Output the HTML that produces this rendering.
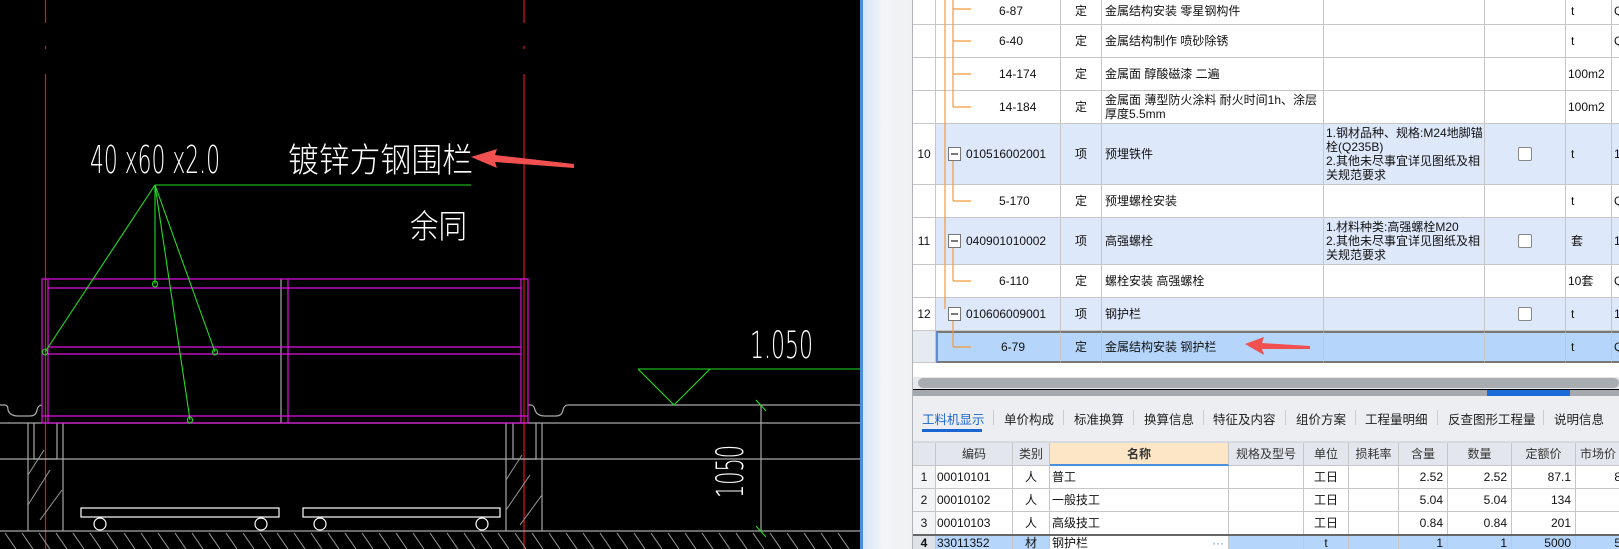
<!DOCTYPE html>
<html style="overflow:hidden"><head><meta charset="utf-8">
<style>
*{margin:0;padding:0;box-sizing:border-box}
body{width:1619px;height:549px;overflow:hidden;background:#000;position:relative;font-family:"Liberation Sans","Noto Sans CJK SC",sans-serif;font-size:12px;color:#111}
.abs{position:absolute}
.row{position:absolute;left:913px;display:flex;background:#fff}
.row>div{border-right:1px solid #c6c6c6;border-bottom:1px solid #c6c6c6;display:flex;align-items:center;overflow:hidden;white-space:nowrap;line-height:14px}
.hl{background:#dde8fb!important}
.sel{background:#b5d5fb!important}
.c{justify-content:center}
.r{justify-content:flex-end;padding-right:4px}
.wrap{white-space:normal!important}
.cb{width:14px;height:14px;border:1px solid #888;border-radius:2px;background:#fff}
.tab{position:absolute;top:409px;font-size:12.5px;color:#222}
.sep{position:absolute;top:410px;width:1px;height:15px;background:#c9ccd0}
</style></head><body>

<svg class="abs" style="left:0;top:0" width="860" height="549" viewBox="0 0 860 549">
<rect width="860" height="549" fill="#000"/>
<g stroke="#e0141e" stroke-width="1.2">
<line x1="45.5" y1="0" x2="45.5" y2="23"/><line x1="45.5" y1="46" x2="45.5" y2="49"/><line x1="45.5" y1="74" x2="45.5" y2="549"/>
<line x1="524" y1="0" x2="524" y2="23"/><line x1="524" y1="46" x2="524" y2="49"/><line x1="524" y1="74" x2="524" y2="549"/>
</g>
<g stroke="#a8a8a8" stroke-width="1.2" fill="none">
<path d="M0 405 H5 Q8 405 8 410 Q10 416 18 416 H30 Q36 416 37 410 Q38 405 42 405"/>
<path d="M528 405 H531 Q534 405 535 410 Q537 416 545 416 H556 Q562 416 563 410 Q564 405 568 405 H860"/>
<line x1="0" y1="423" x2="860" y2="423"/>
<line x1="0" y1="459" x2="860" y2="459"/>
<line x1="28" y1="423" x2="28" y2="531"/><line x1="63" y1="423" x2="63" y2="531"/>
<line x1="506" y1="423" x2="506" y2="531"/><line x1="542" y1="423" x2="542" y2="531"/>
<path d="M34 423 V459 H57 V423"/><path d="M513 423 V459 H536 V423"/>
<line x1="0" y1="531" x2="860" y2="531"/>
<line x1="761" y1="405" x2="761" y2="531"/>
<line x1="281" y1="279" x2="281" y2="423"/>
</g>
<g stroke="#9a9a9a" stroke-width="1">
<path d="M28 475 L44 450 M28 505 L50 470 M40 520 L62 490 M506 480 L522 455 M506 510 L530 475 M520 525 L542 495"/>
<path d="M5 533 L16 549 M22 533 L33 549 M39 533 L50 549 M56 533 L67 549 M73 533 L84 549 M90 533 L101 549 M107 533 L118 549 M124 533 L135 549 M141 533 L152 549 M158 533 L169 549 M175 533 L186 549 M192 533 L203 549 M209 533 L220 549 M226 533 L237 549 M243 533 L254 549 M260 533 L271 549 M277 533 L288 549 M294 533 L305 549 M311 533 L322 549 M328 533 L339 549 M345 533 L356 549 M362 533 L373 549 M379 533 L390 549 M396 533 L407 549 M413 533 L424 549 M430 533 L441 549 M447 533 L458 549 M464 533 L475 549 M481 533 L492 549 M498 533 L509 549 M515 533 L526 549 M532 533 L543 549 M549 533 L560 549 M566 533 L577 549 M583 533 L594 549 M600 533 L611 549 M617 533 L628 549 M634 533 L645 549 M651 533 L662 549 M668 533 L679 549 M685 533 L696 549 M702 533 L713 549 M719 533 L730 549 M736 533 L747 549 M753 533 L764 549 M770 533 L781 549 M787 533 L798 549 M804 533 L815 549 M821 533 L832 549 M838 533 L849 549"/>
</g>
<g stroke="#fff" stroke-width="1.2" fill="none">
<rect x="81" y="508" width="198" height="9"/><rect x="303" y="508" width="197" height="9"/>
<ellipse cx="100" cy="524" rx="6" ry="6"/><ellipse cx="261" cy="524" rx="6" ry="6"/>
<ellipse cx="320" cy="524" rx="6" ry="6"/><ellipse cx="482" cy="524" rx="6" ry="6"/>
</g>
<g stroke="#e010e0" stroke-width="1.2" fill="none">
<rect x="42" y="279" width="486" height="144"/>
<line x1="48" y1="279" x2="48" y2="423"/><line x1="521" y1="279" x2="521" y2="423"/>
<line x1="48" y1="288" x2="521" y2="288"/>
<line x1="48" y1="347" x2="521" y2="347"/><line x1="48" y1="354" x2="521" y2="354"/>
<line x1="42" y1="416" x2="528" y2="416"/>
<line x1="288" y1="279" x2="288" y2="423"/>
</g>
<g stroke="#22dd22" stroke-width="1.1" fill="none">
<line x1="155" y1="185" x2="471" y2="185"/>
<line x1="155" y1="185" x2="45" y2="352"/>
<line x1="155" y1="185" x2="155" y2="284"/>
<line x1="155" y1="185" x2="215" y2="352"/>
<line x1="155" y1="185" x2="190" y2="420"/>
<ellipse cx="155" cy="284" rx="2.5" ry="3"/><ellipse cx="45" cy="352" rx="2.5" ry="3"/>
<ellipse cx="215" cy="352" rx="2.5" ry="3"/><ellipse cx="190" cy="420" rx="2.5" ry="3"/>
<line x1="638" y1="369" x2="860" y2="369"/>
<path d="M638 369 L674 405 L710 369"/>
<line x1="756" y1="400" x2="766" y2="411"/><line x1="756" y1="526" x2="766" y2="537"/>
</g>
<g fill="#fff" font-family="DejaVu Sans, Liberation Sans, sans-serif" font-weight="200">
<text x="90" y="173" font-size="38" textLength="130" lengthAdjust="spacingAndGlyphs">40 x60 x2.0</text>
<text x="750" y="358" font-size="37" textLength="63" lengthAdjust="spacingAndGlyphs">1.050</text>
<text transform="translate(743,498) rotate(-90)" font-size="37" textLength="53" lengthAdjust="spacingAndGlyphs">1050</text>
</g>
<g fill="#fff" font-family="Noto Sans CJK SC, sans-serif" font-weight="200">
<text x="288" y="172" font-size="34" textLength="185" lengthAdjust="spacingAndGlyphs">镀锌方钢围栏</text>
<text x="410" y="238" font-size="33" textLength="57" lengthAdjust="spacingAndGlyphs">余同</text>
</g>
<path d="M471 157 L497 149 L495 155 L574 164 L574 168 L495 162 L497 168 Z" fill="#f05050"/>
</svg>

<div class="abs" style="left:860px;top:0;width:3px;height:549px;background:#4a8fdc"></div>
<div class="abs" style="left:863px;top:0;width:50px;height:549px;background:linear-gradient(90deg,#d6e6f7,#f2f4f7 40%,#f0f1f3)"></div>
<div class="abs" style="left:912px;top:0;width:1px;height:549px;background:#b0b4b8"></div>

<div class="abs" style="left:913px;top:0;width:706px;height:378px;background:#fff"></div>

<div class="row" style="top:-8px;height:33px">
<div style="width:23px"></div><div style="width:125px;padding-left:63px;padding-top:6px">6-87</div><div class="c" style="width:41px;padding-top:6px">定</div><div style="width:222px;padding-left:3px;padding-top:6px">金属结构安装 零星钢构件</div><div style="width:161px"></div><div style="width:81px"></div><div style="width:46px;padding-left:5px;padding-top:6px">t</div><div style="width:60px;padding-left:2px;padding-top:6px">Q</div></div>
<div class="row" style="top:25px;height:33px">
<div style="width:23px"></div><div style="width:125px;padding-left:63px">6-40</div><div class="c" style="width:41px">定</div><div style="width:222px;padding-left:3px">金属结构制作 喷砂除锈</div><div style="width:161px"></div><div style="width:81px"></div><div style="width:46px;padding-left:5px">t</div><div style="width:60px;padding-left:2px">Q</div></div>
<div class="row" style="top:58px;height:33px">
<div style="width:23px"></div><div style="width:125px;padding-left:63px">14-174</div><div class="c" style="width:41px">定</div><div style="width:222px;padding-left:3px">金属面 醇酸磁漆 二遍</div><div style="width:161px"></div><div style="width:81px"></div><div style="width:46px;padding-left:2px">100m2</div><div style="width:60px"></div></div>
<div class="row" style="top:91px;height:33px">
<div style="width:23px"></div><div style="width:125px;padding-left:63px">14-184</div><div class="c" style="width:41px">定</div><div class="wrap" style="width:222px;padding-left:3px">金属面 薄型防火涂料 耐火时间1h、涂层厚度5.5mm</div><div style="width:161px"></div><div style="width:81px"></div><div style="width:46px;padding-left:2px">100m2</div><div style="width:60px"></div></div>
<div class="row hl" style="top:124px;height:61px">
<div class="c" style="width:23px;background:#fff">10</div><div style="width:125px;padding-left:30px">010516002001</div><div class="c" style="width:41px">项</div><div style="width:222px;padding-left:3px">预埋铁件</div><div class="wrap" style="width:161px;padding-left:2px">1.钢材品种、规格:M24地脚锚栓(Q235B)<br>2.其他未尽事宜详见图纸及相关规范要求</div><div class="c" style="width:81px"><span class="cb"></span></div><div style="width:46px;padding-left:5px">t</div><div style="width:60px;padding-left:2px">1</div></div>
<div class="row" style="top:185px;height:33px">
<div style="width:23px"></div><div style="width:125px;padding-left:63px">5-170</div><div class="c" style="width:41px">定</div><div style="width:222px;padding-left:3px">预埋螺栓安装</div><div style="width:161px"></div><div style="width:81px"></div><div style="width:46px;padding-left:5px">t</div><div style="width:60px;padding-left:2px">Q</div></div>
<div class="row hl" style="top:218px;height:47px">
<div class="c" style="width:23px;background:#fff">11</div><div style="width:125px;padding-left:30px">040901010002</div><div class="c" style="width:41px">项</div><div style="width:222px;padding-left:3px">高强螺栓</div><div class="wrap" style="width:161px;padding-left:2px">1.材料种类:高强螺栓M20<br>2.其他未尽事宜详见图纸及相关规范要求</div><div class="c" style="width:81px"><span class="cb"></span></div><div style="width:46px;padding-left:5px">套</div><div style="width:60px;padding-left:2px">1</div></div>
<div class="row" style="top:265px;height:33px">
<div style="width:23px"></div><div style="width:125px;padding-left:63px">6-110</div><div class="c" style="width:41px">定</div><div style="width:222px;padding-left:3px">螺栓安装 高强螺栓</div><div style="width:161px"></div><div style="width:81px"></div><div style="width:46px;padding-left:2px">10套</div><div style="width:60px;padding-left:2px">Q</div></div>
<div class="row hl" style="top:298px;height:33px">
<div class="c" style="width:23px;background:#fff">12</div><div style="width:125px;padding-left:30px">010606009001</div><div class="c" style="width:41px">项</div><div style="width:222px;padding-left:3px">钢护栏</div><div style="width:161px"></div><div class="c" style="width:81px"><span class="cb"></span></div><div style="width:46px;padding-left:5px">t</div><div style="width:60px;padding-left:2px">1</div></div>
<div class="row" style="top:331px;height:32px;background:#e6ebf2">
<div style="width:23px"></div><div class="sel" style="width:125px;padding-left:63px;border-top:2px solid #777;border-left:2px solid #5a8fd8;border-bottom:2px solid #777">6-79</div><div class="c sel" style="width:41px;border-top:2px solid #777;border-bottom:2px solid #777">定</div><div class="sel" style="width:222px;padding-left:3px;border-top:2px solid #777;border-bottom:2px solid #777">金属结构安装 钢护栏</div><div class="sel" style="width:161px;border-top:2px solid #777;border-bottom:2px solid #777"></div><div class="sel" style="width:81px;border-top:2px solid #777;border-bottom:2px solid #777"></div><div class="sel" style="width:46px;padding-left:5px;border-top:2px solid #777;border-bottom:2px solid #777">t</div><div class="sel" style="width:60px;padding-left:2px;border-top:2px solid #777;border-bottom:2px solid #777">Q</div></div>

<svg class="abs" style="left:913px;top:0" width="706" height="378">
<g stroke="#f39a3a" stroke-width="1.2" fill="none">
<line x1="32" y1="0" x2="32" y2="309"/>
<line x1="40" y1="0" x2="40" y2="107"/>
<line x1="40" y1="9" x2="58" y2="9"/><line x1="40" y1="41" x2="58" y2="41"/><line x1="40" y1="74" x2="58" y2="74"/><line x1="40" y1="107" x2="58" y2="107"/>
<line x1="40" y1="161" x2="40" y2="201"/><line x1="40" y1="201" x2="58" y2="201"/>
<line x1="40" y1="248" x2="40" y2="281"/><line x1="40" y1="281" x2="58" y2="281"/>
<line x1="40" y1="321" x2="40" y2="347"/><line x1="40" y1="347" x2="58" y2="347"/>
</g>
<g fill="#fff" stroke="#777" stroke-width="1">
<rect x="35.5" y="147.5" width="12" height="13"/><rect x="35.5" y="234.5" width="12" height="13"/><rect x="35.5" y="307.5" width="12" height="13"/>
</g>
<g stroke="#222" stroke-width="1.2"><line x1="38" y1="154" x2="45" y2="154"/><line x1="38" y1="241" x2="45" y2="241"/><line x1="38" y1="314" x2="45" y2="314"/></g>
<path d="M332 344 L351 337 L349 343 L397 346 L397 349 L349 349 L351 355 Z" fill="#f05050"/>
</svg>

<div class="abs" style="left:913px;top:377px;width:706px;height:12px;background:#e6e8eb"></div>
<div class="abs" style="left:918px;top:378px;width:701px;height:10px;background:#a9acb0;border-radius:5px"></div>
<div class="abs" style="left:913px;top:390px;width:706px;height:6px;background:#a5a9ae"></div>
<div class="abs" style="left:1487px;top:390px;width:83px;height:6px;background:#1b6bd8"></div>

<div class="abs" style="left:913px;top:396px;width:706px;height:46px;background:#eceef1"></div>
<div class="tab" style="left:922px;color:#1a66d0">工料机显示</div>
<div class="abs" style="left:922px;top:429px;width:60px;height:3px;background:#1a66d0"></div>
<div class="sep" style="left:993px"></div><div class="tab" style="left:1004px">单价构成</div>
<div class="sep" style="left:1063px"></div><div class="tab" style="left:1074px">标准换算</div>
<div class="sep" style="left:1133px"></div><div class="tab" style="left:1144px">换算信息</div>
<div class="sep" style="left:1203px"></div><div class="tab" style="left:1213px">特征及内容</div>
<div class="sep" style="left:1285px"></div><div class="tab" style="left:1296px">组价方案</div>
<div class="sep" style="left:1355px"></div><div class="tab" style="left:1365px">工程量明细</div>
<div class="sep" style="left:1437px"></div><div class="tab" style="left:1448px">反查图形工程量</div>
<div class="sep" style="left:1543px"></div><div class="tab" style="left:1554px">说明信息</div>
<div class="abs" style="left:913px;top:441px;width:706px;height:2px;background:#d6d9dd"></div>

<div class="row" style="top:443px;height:23px;background:#e3e7ed;color:#333">
<div style="width:23px"></div><div class="c" style="width:77px">编码</div><div class="c" style="width:37px">类别</div><div class="c" style="width:179px;background:#fde6c6;font-weight:bold;border-bottom:2px solid #4a8fdc">名称</div><div class="c" style="width:75px">规格及型号</div><div class="c" style="width:45px">单位</div><div class="c" style="width:50px">损耗率</div><div class="c" style="width:49px">含量</div><div class="c" style="width:64px">数量</div><div class="c" style="width:64px">定额价</div><div style="width:50px;padding-left:4px">市场价</div></div>
<div class="row" style="top:466px;height:23px">
<div class="c" style="width:23px;background:#f3f4f6">1</div><div style="width:77px;padding-left:1px">00010101</div><div class="c" style="width:37px">人</div><div style="width:179px;padding-left:2px">普工</div><div style="width:75px"></div><div class="c" style="width:45px">工日</div><div style="width:50px"></div><div class="r" style="width:49px">2.52</div><div class="r" style="width:64px">2.52</div><div class="r" style="width:64px">87.1</div><div class="r" style="width:50px">8</div></div>
<div class="row" style="top:489px;height:23px">
<div class="c" style="width:23px;background:#f3f4f6">2</div><div style="width:77px;padding-left:1px">00010102</div><div class="c" style="width:37px">人</div><div style="width:179px;padding-left:2px">一般技工</div><div style="width:75px"></div><div class="c" style="width:45px">工日</div><div style="width:50px"></div><div class="r" style="width:49px">5.04</div><div class="r" style="width:64px">5.04</div><div class="r" style="width:64px">134</div><div style="width:50px"></div></div>
<div class="row" style="top:512px;height:23px">
<div class="c" style="width:23px;background:#f3f4f6">3</div><div style="width:77px;padding-left:1px">00010103</div><div class="c" style="width:37px">人</div><div style="width:179px;padding-left:2px">高级技工</div><div style="width:75px"></div><div class="c" style="width:45px">工日</div><div style="width:50px"></div><div class="r" style="width:49px">0.84</div><div class="r" style="width:64px">0.84</div><div class="r" style="width:64px">201</div><div style="width:50px"></div></div>
<div class="row" style="top:534px;height:15px;background:#b5d5fb;border-top:2px solid #666;align-items:flex-start">
<div class="c" style="width:23px;height:13px;background:#dfe3e9;font-weight:bold;border-bottom:none">4</div><div style="width:77px;height:13px;padding-left:1px;border-bottom:none">33011352</div><div class="c" style="width:37px;height:13px;border-bottom:none">材</div><div style="width:179px;height:13px;padding-left:2px;background:#fff;justify-content:space-between;border-bottom:none">钢护栏<span style="color:#4a8fdc;padding-right:4px">···</span></div><div style="width:75px;height:13px;border-bottom:none"></div><div class="c" style="width:45px;height:13px;border-bottom:none">t</div><div style="width:50px;height:13px;border-bottom:none"></div><div class="r" style="width:49px;height:13px;border-bottom:none">1</div><div class="r" style="width:64px;height:13px;border-bottom:none">1</div><div class="r" style="width:64px;height:13px;border-bottom:none">5000</div><div class="r" style="width:50px;height:13px;border-bottom:none">5</div></div>

</body></html>
